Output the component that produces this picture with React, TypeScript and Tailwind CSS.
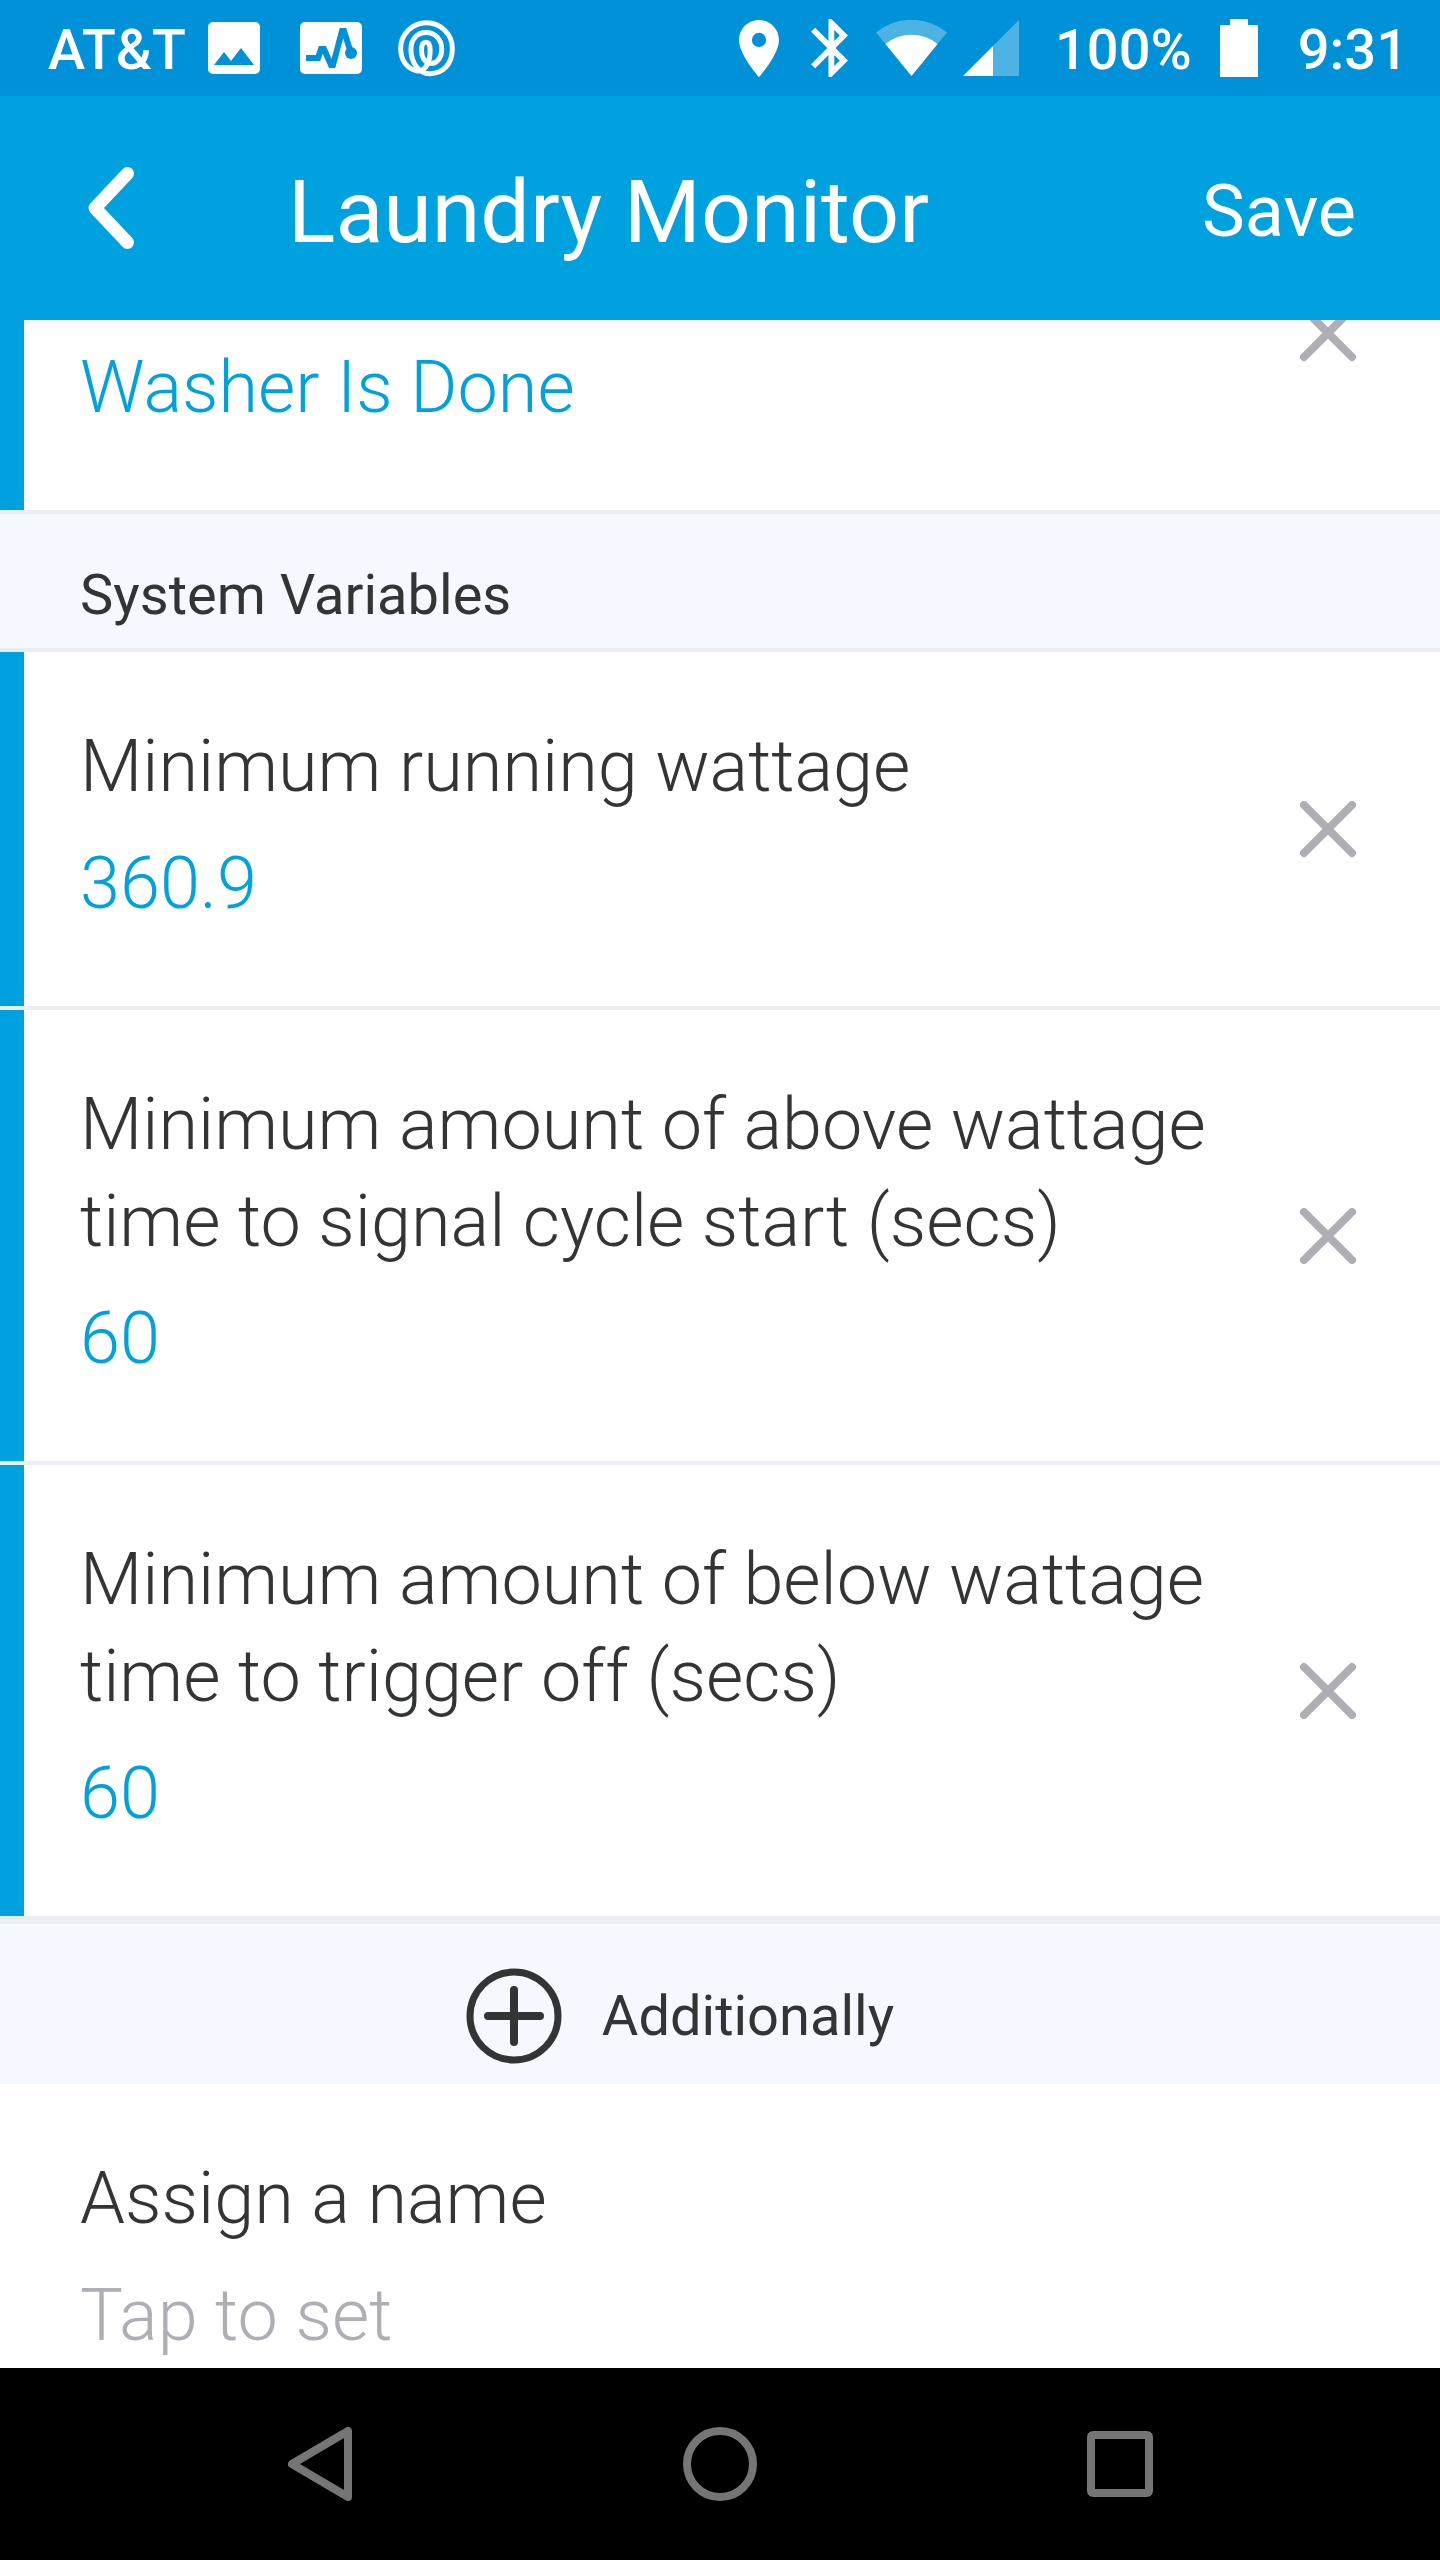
import { useState } from "react";

type Variable = { id: string; label?: string; value: string };

const VARIABLES: Variable[] = [
  { id: "running", label: "Minimum running wattage", value: "360.9" },
  { id: "above", label: "Minimum amount of above wattage time to signal cycle start (secs)", value: "60" },
  { id: "below", label: "Minimum amount of below wattage time to trigger off (secs)", value: "60" },
];

export default function App() {
  const [name, setName] = useState("");

  return (
    <div className="flex h-screen flex-col bg-white font-['Roboto',sans-serif] text-[#323435]">
      <StatusBar />
      <AppBar title="Laundry Monitor" />

      <main className="flex min-h-0 flex-1 flex-col overflow-hidden">
        {/* message row, scrolled partly under the app bar */}
        <div className="-mt-[164px] shrink-0">
          <SettingRow value="Washer Is Done" />
        </div>

        <section className="shrink-0">
          <h2 className="border-y-4 border-[#eaeef2] bg-[#f5f8ff] px-20 pt-12 pb-5 text-[56px] leading-[66px]">
            System Variables
          </h2>
          <div className="divide-y-4 divide-[#eaeef2]">
            {VARIABLES.map((v) => (
              <SettingRow key={v.id} label={v.label} value={v.value} />
            ))}
          </div>
        </section>

        <button className="flex w-full shrink-0 items-center justify-center gap-10 border-t-8 border-[#eaeef2] bg-[#f5f8ff] pt-11 pr-20 pb-5 text-[56px] leading-[66px]">
          <PlusCircle />
          Additionally
        </button>

        <div className="flex shrink-0 flex-col gap-5 px-20 pt-[66px] text-[72px] leading-[97px] font-light">
          <label htmlFor="app-name">Assign a name</label>
          <input
            id="app-name"
            value={name}
            onChange={(e) => setName(e.target.value)}
            placeholder="Tap to set"
            className="h-[97px] w-full bg-transparent placeholder:text-[#aeaeb4] focus:outline-none"
          />
        </div>
      </main>

      <NavBar />
    </div>
  );
}

function SettingRow({ label, value }: { label?: string; value: string }) {
  return (
    <div className="flex min-h-[354px] w-full">
      <div className="w-6 shrink-0 bg-[#00a1df]" />
      <div className="flex flex-1 items-center pr-[84px] pl-14">
        <div className="flex flex-1 flex-col justify-end gap-5 self-stretch pt-[66px] pb-[74px] text-[72px] leading-[97px] font-light">
          {label && <p>{label}</p>}
          <p className="text-[#00a1df]">{value}</p>
        </div>
        <button aria-label="Remove" className="ml-10 shrink-0">
          <svg viewBox="0 0 56 56" className="size-14" fill="none" stroke="#aeaeb4" strokeWidth="8" strokeLinecap="round">
            <path d="M4 4L52 52M52 4L4 52" />
          </svg>
        </button>
      </div>
    </div>
  );
}

function AppBar({ title }: { title: string }) {
  return (
    <header className="flex h-56 shrink-0 items-center bg-[#00a1df] pt-2 pr-[84px] pl-[88px] text-white">
      <button aria-label="Back" className="w-[200px] shrink-0 pb-2">
        <svg viewBox="0 0 46 82" className="h-[82px] w-[46px]" fill="none" stroke="currentColor" strokeWidth="13" strokeLinecap="round" strokeLinejoin="round">
          <path d="M39.5 6.5L7 41L39.5 75.5" />
        </svg>
      </button>
      <h1 className="flex-1 text-[88px] leading-[104px]">{title}</h1>
      <button className="text-[72px] leading-[84px]">Save</button>
    </header>
  );
}

function StatusBar() {
  return (
    <div className="flex h-24 shrink-0 items-center justify-between bg-[#0091d9] pr-8 pl-12 text-[56px] leading-[66px] font-medium text-white">
      <div className="flex items-center">
        <span className="pt-1">AT&amp;T</span>
        {/* screenshot saved */}
        <svg viewBox="0 0 52 52" className="ml-[22px] size-[52px]">
          <path fill="currentColor" fillRule="evenodd" d="M5 0H47A5 5 0 0 1 52 5V47A5 5 0 0 1 47 52H5A5 5 0 0 1 0 47V5A5 5 0 0 1 5 0ZM6 43H46L33 26L23 39L16 30Z" />
        </svg>
        {/* activity monitor */}
        <svg viewBox="0 0 62 52" className="ml-10 h-[52px] w-[62px]">
          <rect width="62" height="52" rx="5" fill="currentColor" />
          <path d="M6 36H18L21 27H24L31 43H33L42 9H44L51 31" fill="none" stroke="#0091d9" strokeWidth="6" />
          <circle cx="51" cy="31" r="6" fill="#0091d9" />
        </svg>
        {/* coil */}
        <svg viewBox="1192 57 172 172" className="ml-9 size-[57px]" fill="none" stroke="currentColor" strokeWidth="15">
          <path d="M1250 211C1218 204 1200 177 1200 143A78 78 0 0 1 1356 143C1356 190 1328 219 1288 219C1255 219 1231 185 1231 145C1231 115 1250 95 1277 95C1305 95 1324 117 1324 145C1324 170 1310 188 1292 188C1272 188 1263 168 1263 148C1263 132 1268 124 1276 124C1285 124 1289 132 1289 148C1289 178 1278 213 1250 211" />
        </svg>
      </div>

      <div className="flex items-center">
        <svg viewBox="5 2 14 20" className="h-[57px] w-10" fill="currentColor">
          <path d="M12 2C8.13 2 5 5.13 5 9c0 5.25 7 13 7 13s7-7.75 7-13c0-3.87-3.13-7-7-7zm0 9.5a2.5 2.5 0 0 1 0-5 2.5 2.5 0 0 1 0 5z" />
        </svg>
        <svg viewBox="5 2 12.71 20" className="ml-8 h-[58px] w-[37px]" fill="currentColor">
          <path d="M17.71 7.71L12 2h-1v7.59L6.41 5 5 6.41 10.59 12 5 17.59 6.41 19 11 14.41V22h1l5.71-5.71-4.3-4.29 4.3-4.29zM13 5.83l1.88 1.88L13 9.59V5.83zm1.88 10.46L13 18.17v-3.76l1.88 1.88z" />
        </svg>
        <svg viewBox="0 0 71 56" className="ml-7 h-14 w-[71px]" fill="currentColor">
          <path opacity="0.3" d="M0 12.5A56 56 0 0 1 71 12.5L35.5 56Z" />
          <path d="M9.5 24A41 41 0 0 1 61.5 24L35.5 56Z" />
        </svg>
        <svg viewBox="0 0 56 56" className="ml-4 size-14" fill="currentColor">
          <path opacity="0.3" d="M30 56V26L56 0V56Z" />
          <path d="M0 56L30 26V56Z" />
        </svg>
        <span className="ml-9 pt-1">100%</span>
        <svg viewBox="0 0 38 58" className="ml-7 h-[58px] w-[38px]" fill="currentColor">
          <path d="M10 0H28V6H38V58H0V6H10Z" />
        </svg>
        <span className="ml-10 pt-1">9:31</span>
      </div>
    </div>
  );
}

function PlusCircle() {
  return (
    <svg viewBox="0 0 96 96" className="size-24" fill="none" stroke="currentColor" strokeLinecap="round">
      <circle cx="48" cy="48" r="44" strokeWidth="7" />
      <path strokeWidth="8" d="M48 22V74M22 48H74" />
    </svg>
  );
}

function NavBar() {
  return (
    <nav className="flex h-48 shrink-0 items-center bg-black px-[120px] text-[#757575]">
      <button aria-label="Back" className="flex flex-1 justify-center">
        <svg viewBox="0 0 64 74" className="h-[74px] w-16" fill="none" stroke="currentColor" strokeWidth="8" strokeLinejoin="round">
          <path d="M60 4V70L4 37Z" />
        </svg>
      </button>
      <button aria-label="Home" className="flex flex-1 justify-center">
        <svg viewBox="0 0 74 74" className="size-[74px]" fill="none" stroke="currentColor" strokeWidth="8">
          <circle cx="37" cy="37" r="33" />
        </svg>
      </button>
      <button aria-label="Recent apps" className="flex flex-1 justify-center">
        <svg viewBox="0 0 66 66" className="size-[66px]" fill="none" stroke="currentColor" strokeWidth="8">
          <rect x="4" y="4" width="58" height="58" rx="2" />
        </svg>
      </button>
    </nav>
  );
}
